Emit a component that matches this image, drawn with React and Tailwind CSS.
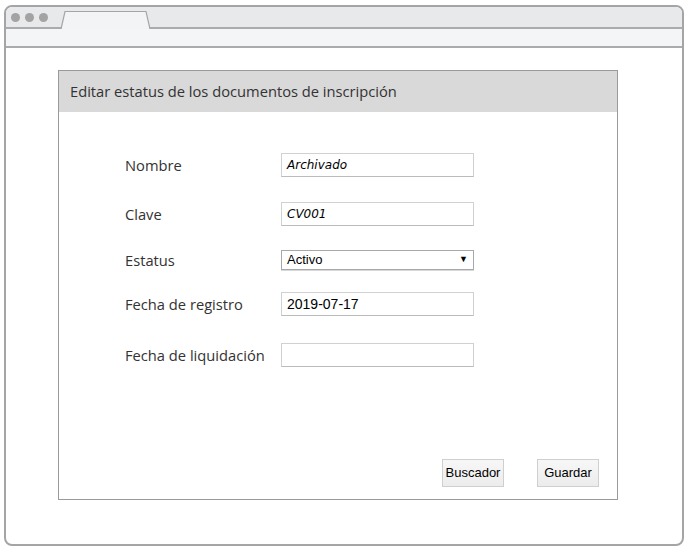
import React from "react";

const fields = [
  { label: "Nombre", value: "Archivado", mt: "mt-[41px]", hand: true },
  { label: "Clave", value: "CV001", mt: "mt-[25px]", hand: true },
  { label: "Estatus", value: "Activo", mt: "mt-[24px]", select: true },
  { label: "Fecha de registro", value: "2019-07-17", mt: "mt-[22px]" },
  { label: "Fecha de liquidación", value: "", mt: "mt-[27px]" },
];

const Field = ({ field }) => (
  <div className={`flex items-center ${field.mt}`}>
    <div className="w-[156px] text-[14.7px] leading-[18px] text-[#333]">{field.label}</div>
    {field.select ? (
      <div className="flex h-[20px] w-[193px] items-center justify-between border border-[#a8a8a8] bg-white pl-[5px] pr-[5px] text-[13px] text-black font-['Liberation_Sans',Arial,sans-serif] shadow-[0_1px_0_#d6d8da]">
        <span>{field.value}</span>
        <span className="text-[9px]">▼</span>
      </div>
    ) : (
      <div
        className={`flex h-[24px] w-[193px] items-center border border-[#cfd1d3] border-b-[#b9bcbf] bg-white px-[5px] text-black ${
          field.hand
            ? "italic font-['DejaVu_Sans',sans-serif] text-[12px]"
            : "font-['Liberation_Sans',Arial,sans-serif] text-[14px]"
        }`}
      >
        {field.value}
      </div>
    )}
  </div>
);

const Button = ({ children }) => (
  <button className="h-[28px] w-[62px] border border-[#cfcfcf] bg-gradient-to-b from-[#f7f7f7] to-[#ececec] text-[13px] text-black font-['Liberation_Sans',Arial,sans-serif]">
    {children}
  </button>
);

const App = () => {
  return (
    <div className="h-[549px] w-[687px] bg-white pl-[4px] pt-[5px] font-['Open_Sans',sans-serif]">
      <div className="flex h-[541px] w-[680px] flex-col overflow-hidden rounded-[8px] border-2 border-[#a3a5a7] bg-white">
        {/* tab strip */}
        <div className="relative flex h-[22px] items-center gap-[5px] border-b-2 border-[#a9abad] bg-[#e8e9ea] pl-[5px]">
          <span className="h-[9px] w-[9px] rounded-full bg-[#a3a3a3]" />
          <span className="h-[9px] w-[9px] rounded-full bg-[#a3a3a3]" />
          <span className="h-[9px] w-[9px] rounded-full bg-[#a3a3a3]" />
          <svg
            className="absolute bottom-[-2px] left-[54px]"
            width="94"
            height="19"
            viewBox="0 0 94 19"
          >
            <path d="M1 19 L5 1.5 L86 1.5 L90 19" fill="#f3f4f5" stroke="#a3a5a7" strokeWidth="1.2" />
          </svg>
        </div>
        {/* address bar */}
        <div className="h-[19px] border-b-2 border-[#a9abad] bg-[#f4f5f6]" />
        {/* content */}
        <div className="flex-1 pl-[52px] pt-[22px]">
          <div className="flex h-[430px] w-[560px] flex-col border border-[#9a9a9a]">
            <div className="flex h-[41px] items-center bg-[#d9d9d9] pl-[11px] text-[14.7px] text-[#333]">
              Editar estatus de los documentos de inscripción
            </div>
            <div className="flex flex-1 flex-col pl-[66px]">
              {fields.map((f) => (
                <Field key={f.label} field={f} />
              ))}
              <div className="mt-auto mb-[12px] flex justify-end gap-[33px] pr-[18px]">
                <Button>Buscador</Button>
                <Button>Guardar</Button>
              </div>
            </div>
          </div>
        </div>
      </div>
    </div>
  );
};

export default App;
